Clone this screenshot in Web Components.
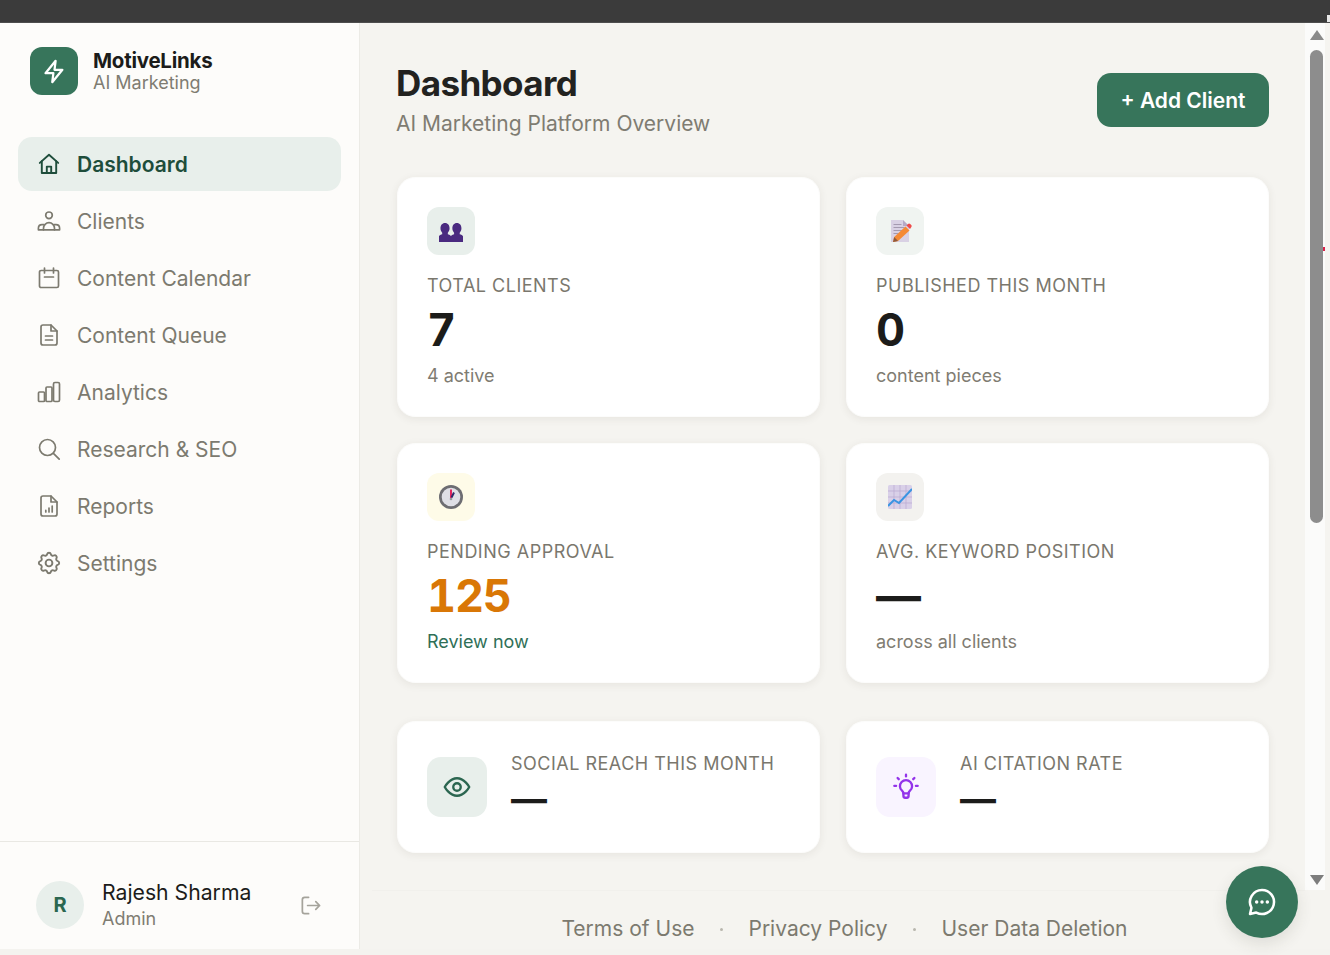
<!DOCTYPE html>
<html lang="en">
<head>
<meta charset="utf-8">
<title>MotiveLinks</title>
<style>
html, body { margin: 0; height: 955px; overflow: hidden; background: #f4f3ef; }
body { font-family: Inter, "Liberation Sans", sans-serif; font-optical-sizing: none; }
</style>
</head>
<body>
<app-shell>
  <side-bar slot="side">
    <nav-item icon="home" active>Dashboard</nav-item>
    <nav-item icon="users">Clients</nav-item>
    <nav-item icon="calendar">Content Calendar</nav-item>
    <nav-item icon="file">Content Queue</nav-item>
    <nav-item icon="bars">Analytics</nav-item>
    <nav-item icon="search">Research &amp; SEO</nav-item>
    <nav-item icon="report">Reports</nav-item>
    <nav-item icon="gear">Settings</nav-item>
  </side-bar>
  <dash-main slot="main"></dash-main>
  <fake-scrollbar slot="scroll"></fake-scrollbar>
</app-shell>
<chat-fab></chat-fab>

<script>
const ICONS = {
  home: '<path d="M2.8 10.9 12 2.800l9.200 8.100"/><path d="M4.800 9.200V21h14.400V9.200"/><path d="M9.800 21v-6.400h4.400V21"/>',
  users: '<circle cx="12" cy="6.300" r="3.300"/><path d="M6.500 20.800v-1.600a5.500 5.500 0 0 1 11 0v1.600"/><path d="M6.800 15.700H5a3.600 3.600 0 0 0-3.600 3.500v1.600h21.200v-1.600a3.600 3.600 0 0 0-3.600-3.500h-1.800"/>',
  calendar: '<rect x="2.500" y="4.500" width="19" height="17" rx="1.600"/><path d="M7.500 2v5M16.500 2v5M7.500 11h9"/>',
  file: '<path d="M14 2H6a2 2 0 0 0-2 2v16a2 2 0 0 0 2 2h12a2 2 0 0 0 2-2V8z"/><path d="M14 2v6h6M8.500 13h7M8.500 17h7"/>',
  bars: '<rect x="1.500" y="12" width="6" height="9.500" rx="1"/><rect x="9" y="7" width="6" height="14.500" rx="1"/><rect x="16.500" y="2.500" width="6" height="19" rx="1.400"/>',
  search: '<circle cx="10.500" cy="10.500" r="8"/><path d="m16.400 16.400 5.800 5.800"/>',
  report: '<path d="M14 2H6a2 2 0 0 0-2 2v16a2 2 0 0 0 2 2h12a2 2 0 0 0 2-2V8z"/><path d="M14 2v6h6M8.800 18v-1.600M12 18v-4M15.200 18v-6"/>',
  gear: '<g transform="translate(12 12) scale(1.130) translate(-12 -12)"><path d="M10.325 4.317c.426-1.756 2.924-1.756 3.350 0a1.724 1.724 0 002.573 1.066c1.543-.94 3.310.826 2.370 2.370a1.724 1.724 0 001.065 2.572c1.756.426 1.756 2.924 0 3.350a1.724 1.724 0 00-1.066 2.573c.94 1.543-.826 3.310-2.370 2.370a1.724 1.724 0 00-2.572 1.065c-.426 1.756-2.924 1.756-3.350 0a1.724 1.724 0 00-2.573-1.066c-1.543.94-3.310-.826-2.370-2.370a1.724 1.724 0 00-1.065-2.572c-1.756-.426-1.756-2.924 0-3.350a1.724 1.724 0 001.066-2.573c-.94-1.543.826-3.310 2.370-2.370.996.608 2.296.07 2.572-1.065z"/><circle cx="12" cy="12" r="3"/></g>',
  bolt: '<path d="M13 2.500 4 13.500h7l-1 8 9-11h-7z"/>',
  logout: '<path d="M10 3.500H6a2.500 2.500 0 0 0-2.500 2.500v12A2.500 2.500 0 0 0 6 20.500h4"/><path d="M9 12h12.500M17.500 8l4 4-4 4"/>',
  eye: '<path d="M1.500 12S5.500 4.500 12 4.500 22.500 12 22.500 12 18.500 19.500 12 19.500 1.500 12 1.500 12z"/><circle cx="12" cy="12" r="3.200"/>',
  bulb: '<path d="M8.600 15.200a5.200 5.200 0 1 1 6.800 0c-.7.6-1.200 1.400-1.200 2.300H9.800c0-.9-.5-1.700-1.200-2.300z"/><path d="M9.800 17.500v2.300c0 .8.6 1.400 1.400 1.400h1.600c.8 0 1.400-.6 1.400-1.400v-2.300"/><path d="M12 1.500v1.400M4.800 4.300l1 1M19.200 4.300l-1 1M2 11h1.500M20.500 11H22"/>',
  chat: '<path d="M12 3a9 9 0 1 1-4.300 16.900L3 21l1.100-4.700A9 9 0 0 1 12 3z"/><path d="M8 12h.01M12 12h.01M16 12h.01" stroke-width="2.600"/>'
};
const svgIcon = (name, size, sw) => `<svg width="${size}" height="${size}" viewBox="0 0 24 24" fill="none" stroke="currentColor" stroke-width="${sw}" stroke-linecap="round" stroke-linejoin="round">${ICONS[name]}</svg>`;

const PICTURES = {
  busts: `<svg width="24" height="24" viewBox="0 0 24 24" fill="#4a2a80"><g transform="translate(-1 0) scale(1.080 1.150)"><path d="M6.500 3.500c2.700 0 4.200 2 4.200 4.600 0 1.700-.7 3-1.600 3.800v1.400c2 .6 3.400 1.200 3.400 3v3.700H.5v-3.700c0-1.800 1.400-2.400 3.400-3v-1.400C3 11.100 2.300 9.800 2.300 8.100c0-2.600 1.500-4.600 4.200-4.600z"/><path d="M17.500 3.500c2.700 0 4.200 2 4.200 4.600 0 1.700-.7 3-1.600 3.800v1.400c2 .6 3.400 1.200 3.400 3v3.700H11.500v-3.700c0-1.800 1.400-2.400 3.400-3v-1.400c-.9-.8-1.600-2.100-1.600-3.800 0-2.600 1.500-4.600 4.200-4.600z"/></g></svg>`,
  memo: `<svg width="24" height="24" viewBox="0 0 24 24"><path d="M3 1h12l6 6v16H3z" fill="#d9d1e4"/><path d="M15 1l6 6h-6z" fill="#b5a9c6"/><path d="M5.500 5.500h8M5.500 8.500h11M5.500 11.500h9M5.500 14.500h5" stroke="#a49ab0" stroke-width="1"/><path d="M5 23l1.200-5L17.500 7.500l4 4L10 22z" fill="#f58a35"/><path d="M5 23l1.200-5 3.800 4z" fill="#8e5a3c"/><path d="M18.500 6.500l1.500-1.500a1.600 1.600 0 0 1 2.200 0l1 1a1.600 1.600 0 0 1 0 2.200L22 10z" fill="#ee4b4b"/></svg>`,
  clock: `<svg width="24" height="24" viewBox="0 0 24 24"><circle cx="12" cy="12" r="12" fill="#6d6d72"/><circle cx="12" cy="12" r="9.300" fill="#dfdfe6"/><path d="M12 13V4.500" stroke="#e0245e" stroke-width="2"/><path d="M12.500 12.500l2.500-5" stroke="#2c2a6a" stroke-width="2"/><circle cx="12" cy="14" r="1.300" fill="#9a9aa0"/></svg>`,
  chart: `<svg width="24" height="24" viewBox="0 0 24 24"><rect x="0" y="0" width="24" height="24" rx="1.500" fill="#d9d0e8"/><path d="M6 0v24M12 0v24M18 0v24M0 6h24M0 12h24M0 18h24" stroke="#b9abd0" stroke-width=".7"/><path d="M0 21l6-6 5 3L24 4" fill="none" stroke="#3a94e2" stroke-width="2"/></svg>`
};

customElements.define('app-shell', class extends HTMLElement {
  constructor() {
    super();
    this.attachShadow({ mode: 'open' }).innerHTML = `
    <style>
      :host { display: flex; flex-direction: column; height: 949px; }
      .top { height: 22px; flex: none; background: #3b3b3b; border-bottom: 1px solid #4e4e4e; display: flex; justify-content: flex-end; align-items: flex-end; }
      .top i { width: 3px; height: 7px; background: #e8e8e8; }
      .body { flex: 1; min-height: 0; display: flex; }
    </style>
    <div class="top"><i></i></div>
    <div class="body">
      <slot name="side"></slot>
      <slot name="main"></slot>
      <slot name="scroll"></slot>
    </div>`;
  }
});

customElements.define('side-bar', class extends HTMLElement {
  constructor() {
    super();
    this.attachShadow({ mode: 'open' }).innerHTML = `
    <style>
      :host { display: flex; flex-direction: column; width: 360px; flex: none; box-sizing: border-box; background: #fdfcfa; border-right: 1px solid #ecebe6; }
      .brand { display: flex; align-items: center; gap: 15px; padding: 24px 30px 42px; }
      .logo { width: 48px; height: 48px; border-radius: 12px; background: #37755b; color: #fff; display: grid; place-items: center; }
      .name { font-size: 20.500px; line-height: 24px; font-weight: 700; color: #1c1c1a; letter-spacing: -.25px; }
      .tag { font-size: 18px; line-height: 20px; color: #7f7c72; }
      nav { flex: 1; display: flex; flex-direction: column; gap: 3px; padding: 0 18px; }
      .user { height: 108px; box-sizing: border-box; border-top: 1px solid #e9e8e3; display: flex; align-items: center; padding: 19px 36px 0; gap: 18px; }
      .ava { width: 48px; height: 48px; border-radius: 50%; background: #e8efeb; color: #2b6650; font-weight: 700; font-size: 20px; display: grid; place-items: center; flex: none; }
      .who { flex: 1; }
      .uname { font-size: 21.200px; line-height: 27px; color: #1c1c1a; }
      .role { font-size: 18px; line-height: 25px; color: #7f7c72; }
      .out { color: #a5a39b; display: flex; margin-right: 1px; }
    </style>
    <div class="brand">
      <div class="logo">${svgIcon('bolt', 27, 2)}</div>
      <div><div class="name">MotiveLinks</div><div class="tag">AI Marketing</div></div>
    </div>
    <nav><slot></slot></nav>
    <div class="user">
      <div class="ava">R</div>
      <div class="who"><div class="uname">Rajesh Sharma</div><div class="role">Admin</div></div>
      <div class="out">${svgIcon('logout', 23, 1.800)}</div>
    </div>`;
  }
});

customElements.define('nav-item', class extends HTMLElement {
  connectedCallback() {
    const active = this.hasAttribute('active');
    this.attachShadow({ mode: 'open' }).innerHTML = `
    <style>
      :host { display: flex; align-items: center; gap: 16px; height: 54px; box-sizing: border-box; padding: 0 19px; border-radius: 14px; font-size: 21px; color: #7c7a6f; }
      :host([active]) { background: #e8efeb; color: #1e4d3b; font-weight: 600; }
      svg { flex: none; display: block; }
    </style>
    ${svgIcon(this.getAttribute('icon'), 24, active ? 1.900 : 1.700)}<slot></slot>`;
  }
});

customElements.define('stat-card', class extends HTMLElement {
  connectedCallback() {
    const a = n => this.getAttribute(n);
    this.attachShadow({ mode: 'open' }).innerHTML = `
    <style>
      :host { display: block; height: 240px; box-sizing: border-box; padding: 29px; background: #fff; border-radius: 18px; border: 1px solid #fcfcfb; box-shadow: 0 2px 8px rgba(60,55,40,.08); }
      .pic { width: 48px; height: 48px; border-radius: 12px; display: grid; place-items: center; background: ${a('tint')}; }
      .label { margin-top: 19px; font-size: 18px; line-height: 24px; letter-spacing: .5px; color: #7a776d; }
      .value { margin-top: 3px; font-size: 45px; line-height: 58px; font-weight: 700; font-variant-numeric: tabular-nums; letter-spacing: -1.200px; color: ${a('color') || '#1c1c1a'}; }
      .sub { margin-top: 5px; font-size: 18px; line-height: 23px; color: ${a('subcolor') || '#7f7c72'}; }
    </style>
    <div class="pic">${PICTURES[a('pic')]}</div>
    <div class="label">${a('label')}</div>
    <div class="value">${a('value')}</div>
    <div class="sub">${a('sub')}</div>`;
  }
});

customElements.define('metric-card', class extends HTMLElement {
  connectedCallback() {
    const a = n => this.getAttribute(n);
    this.attachShadow({ mode: 'open' }).innerHTML = `
    <style>
      :host { display: flex; align-items: center; gap: 24px; height: 132px; box-sizing: border-box; padding: 0 29px; background: #fff; border-radius: 18px; border: 1px solid #fcfcfb; box-shadow: 0 2px 8px rgba(60,55,40,.08); }
      .pic { width: 60px; height: 60px; border-radius: 14px; flex: none; display: grid; place-items: center; background: ${a('tint')}; color: ${a('color')}; }
      .text { align-self: flex-start; padding-top: 30px; }
      .label { font-size: 18px; line-height: 24px; letter-spacing: .5px; color: #7a776d; }
      .value { font-size: 36px; line-height: 46px; font-weight: 700; color: #1c1c1a; }
    </style>
    <div class="pic">${svgIcon(a('icon'), 28, 2)}</div>
    <div class="text"><div class="label">${a('label')}</div><div class="value">—</div></div>`;
  }
});

customElements.define('dash-main', class extends HTMLElement {
  constructor() {
    super();
    this.attachShadow({ mode: 'open' }).innerHTML = `
    <style>
      :host { display: block; flex: 1; min-width: 0; overflow: hidden; background: #f5f4f0; padding: 37px 36px 0 37px; box-sizing: border-box; color: #1c1c1a; }
      header { display: flex; justify-content: space-between; align-items: flex-start; height: 117px; }
      .title { margin-left: -1px; }
      h1 { margin: 0; font-size: 35px; line-height: 46px; font-weight: 700; letter-spacing: -.6px; color: #222220; }
      p { margin: 4px 0 0; font-size: 21px; line-height: 28px; color: #7f7c72; }
      button { margin-top: 13px; width: 172px; height: 54px; padding: 0; border: 0; border-radius: 14px; background: #37755b; color: #fff; font: 600 21px Inter, "Liberation Sans", sans-serif; font-optical-sizing: none; }
      .grid { display: grid; grid-template-columns: 1fr 1fr; gap: 26px; }
      .grid.low { margin-top: 38px; }
      footer { margin: 37px -36px 0 -37px; padding-top: 24px; border-top: 1px solid #f1f0ec; display: flex; justify-content: center; align-items: center; gap: 25.500px; font-size: 21px; line-height: 28px; color: #7c7a6f; position: relative; left: 12px; }
      footer i { width: 3px; height: 3px; border-radius: 50%; background: #b9b7ae; }
    </style>
    <header>
      <div class="title"><h1>Dashboard</h1><p>AI Marketing Platform Overview</p></div>
      <button>+ Add Client</button>
    </header>
    <div class="grid">
      <stat-card pic="busts" tint="#e8efeb" label="TOTAL CLIENTS" value="7" sub="4 active"></stat-card>
      <stat-card pic="memo" tint="#f0f4f1" label="PUBLISHED THIS MONTH" value="0" sub="content pieces"></stat-card>
      <stat-card pic="clock" tint="#fefbe8" label="PENDING APPROVAL" value="125" color="#d97706" sub="Review now" subcolor="#2f6f57"></stat-card>
      <stat-card pic="chart" tint="#f3f2ef" label="AVG. KEYWORD POSITION" value="—" sub="across all clients"></stat-card>
    </div>
    <div class="grid low">
      <metric-card icon="eye" tint="#e8efeb" color="#2b6650" label="SOCIAL REACH THIS MONTH"></metric-card>
      <metric-card icon="bulb" tint="#f9f4ff" color="#9333ea" label="AI CITATION RATE"></metric-card>
    </div>
    <footer><span>Terms of Use</span><i></i><span>Privacy Policy</span><i></i><span>User Data Deletion</span></footer>`;
  }
});

customElements.define('fake-scrollbar', class extends HTMLElement {
  constructor() {
    super();
    this.attachShadow({ mode: 'open' }).innerHTML = `
    <style>
      :host { display: block; flex: none; width: 25px; background: #f5f4f0; }
      .track { position: relative; width: 20px; height: 867px; box-sizing: border-box; padding-top: 7px; background: #fbfbfa; display: flex; flex-direction: column; align-items: center; }
      .up, .down { width: 0; height: 0; border-left: 7px solid transparent; border-right: 7px solid transparent; margin-left: 3px; }
      .up { border-bottom: 10px solid #8a8a8a; }
      .down { border-top: 10px solid #7d7d7d; margin-top: auto; margin-bottom: 5px; }
      .thumb { width: 13px; height: 473px; margin: 10px 0 0 3px; border-radius: 7px; background: #8d8d8d; }
      .mark { position: absolute; top: 224px; right: 0; width: 2px; height: 4px; background: #d9234a; }
    </style>
    <div class="track"><div class="up"></div><div class="thumb"></div><div class="down"></div><div class="mark"></div></div>`;
  }
});

customElements.define('chat-fab', class extends HTMLElement {
  constructor() {
    super();
    this.attachShadow({ mode: 'open' }).innerHTML = `
    <style>
      :host { position: fixed; left: 1226px; top: 866px; width: 72px; height: 72px; border-radius: 50%; background: #37755b; color: #fff; display: grid; place-items: center; box-shadow: 0 6px 16px rgba(60,55,40,.12); }
    </style>
    ${svgIcon('chat', 32, 1.900)}`;
  }
});
</script>
</body>
</html>
